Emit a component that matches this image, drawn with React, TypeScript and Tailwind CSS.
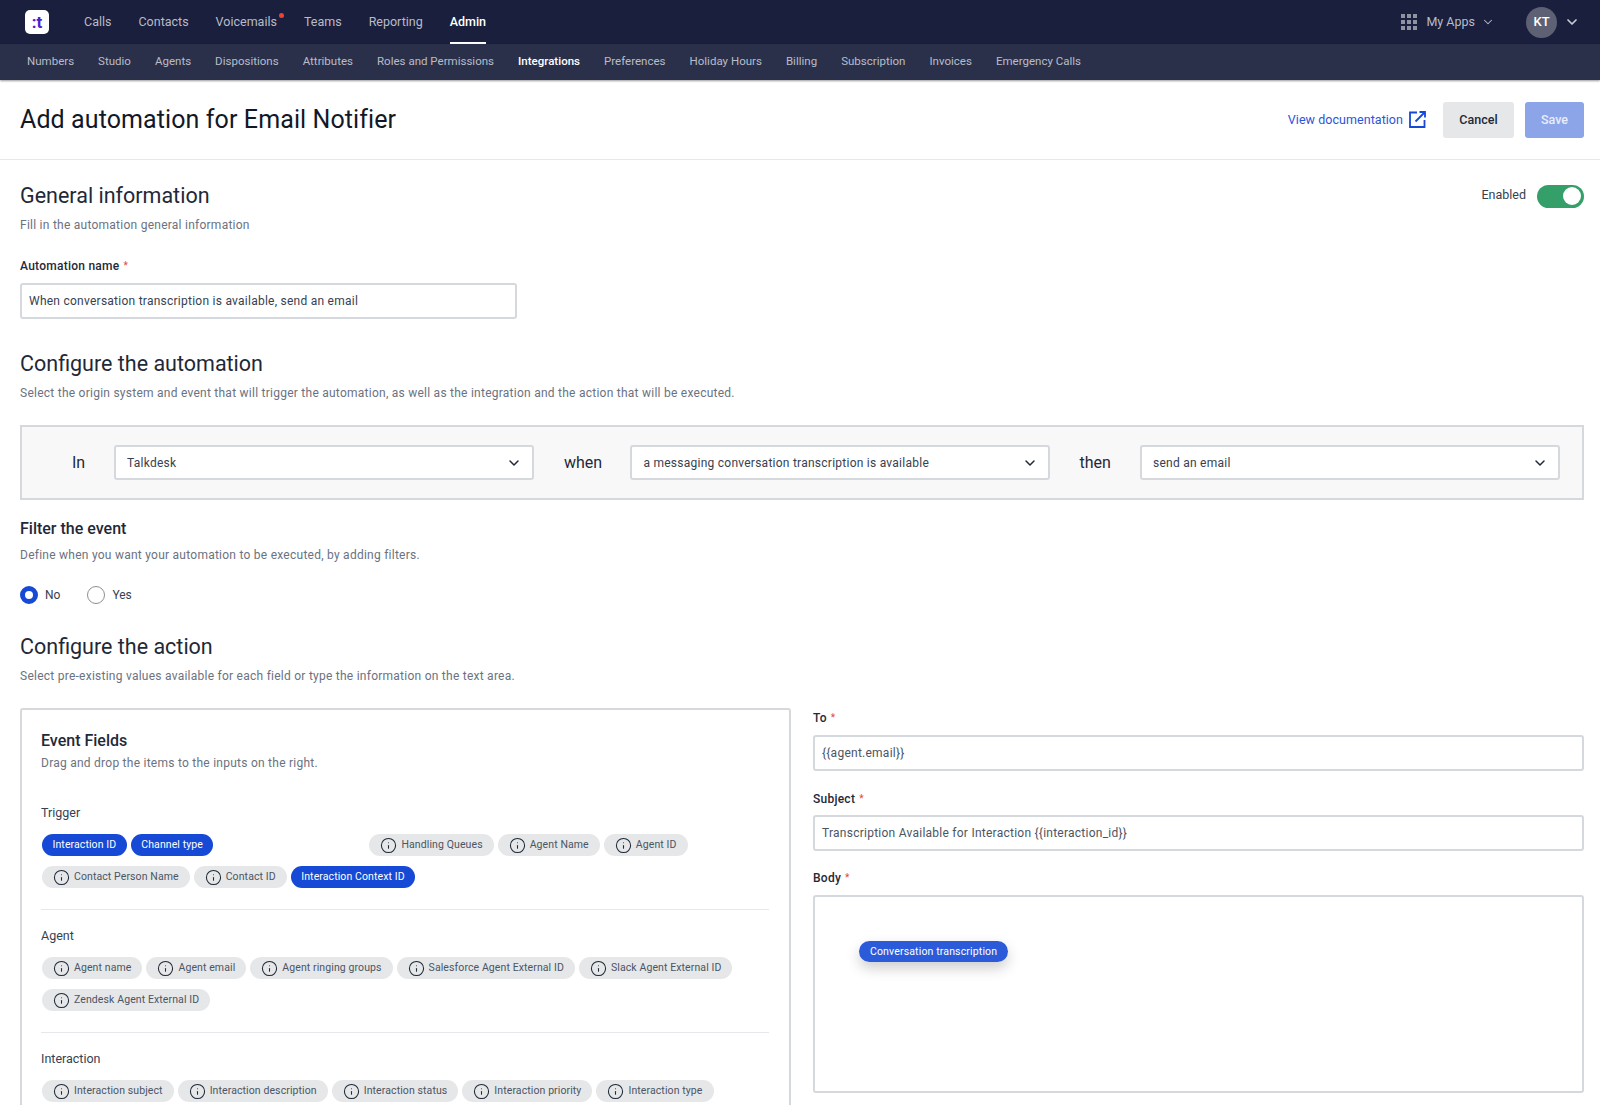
import { ChevronDown, Info } from "lucide-react"

const mainLinks = ["Calls", "Contacts", "Voicemails", "Teams", "Reporting", "Admin"]
const subLinks = ["Numbers", "Studio", "Agents", "Dispositions", "Attributes", "Roles and Permissions", "Integrations", "Preferences", "Holiday Hours", "Billing", "Subscription", "Invoices", "Emergency Calls"]

function Chip({ label, active }: { label: string; active?: boolean }) {
    if (active) {
        return <span className="h-[22px] px-[10.5px] rounded-full bg-[#1549d6] text-white text-[10.5px] leading-[22px] tracking-[0.1px] whitespace-nowrap">{label}</span>
    }
    return (
        <span className="h-[22px] pl-[11px] pr-[11px] rounded-full bg-[#e6e7e9] text-[#4b5563] text-[10.5px] tracking-[0.1px] flex items-center gap-[4px] whitespace-nowrap">
            <Info size={17} strokeWidth={1.5} className="text-[#1f2937]" />
            {label}
        </span>
    )
}

function FieldLabel({ label }: { label: string }) {
    return (
        <div className="text-[12px] font-medium leading-[14px] tracking-[0.25px] text-[#1f2937] flex items-center gap-[4px]">
            {label}
            <span className="text-[#e5443a] text-[10px] font-normal">*</span>
        </div>
    )
}

function Select({ value, width }: { value: string; width: string }) {
    return (
        <div className={`${width} h-[35px] bg-white border-2 border-[#d5d9dd] rounded-[3px] pl-[11px] pr-[10px] flex items-center justify-between text-[12px] tracking-[0.25px] text-[#374151]`}>
            {value}
            <ChevronDown size={16} strokeWidth={2.2} className="text-[#1f2937]" />
        </div>
    )
}

export default function App() {
    return (
        <div className="h-[1105px] overflow-hidden bg-white font-['Roboto',sans-serif]">
            <header className="h-[44px] bg-[#191f3c] flex items-center pl-[25px] pr-[20px]">
                <div className="w-[24px] h-[24px] bg-white rounded-[5px] flex items-center justify-center text-[#4a1fd0] text-[17px] font-bold leading-none">:t</div>
                <nav className="flex h-full ml-[35px] gap-[27px]">
                    {mainLinks.map((link) => (
                        <div key={link} className={`relative h-full flex items-center text-[12.5px] ${link === "Admin" ? "text-white font-medium" : "text-[#b9bcc8]"}`}>
                            {link}
                            {link === "Voicemails" && <span className="absolute top-[13px] right-[-7px] w-[5px] h-[5px] rounded-full bg-[#ef4136]" />}
                            {link === "Admin" && <span className="absolute bottom-0 left-0 right-0 h-[2px] bg-white" />}
                        </div>
                    ))}
                </nav>
                <div className="ml-auto flex items-center text-[#b9bcc8] text-[12.5px]">
                    <div className="grid grid-cols-3 gap-[2px] w-[15px]">
                        {Array.from({ length: 9 }).map((_, i) => <span key={i} className="w-[4px] h-[4px] bg-[#8f92a1]" />)}
                    </div>
                    <span className="ml-[10px]">My Apps</span>
                    <ChevronDown size={14} strokeWidth={1.8} className="ml-[6px]" />
                    <div className="ml-[31px] w-[31px] h-[31px] rounded-full bg-[#5e6173] text-white text-[13px] font-medium flex items-center justify-center">KT</div>
                    <ChevronDown size={16} strokeWidth={2.6} className="ml-[7px] text-[#c9cbd3]" />
                </div>
            </header>
            <div className="h-[36px] bg-[#2a304a] shadow-[0_1px_2px_rgba(0,0,0,0.4)] flex items-center pl-[27px] gap-[24px] relative">
                {subLinks.map((link) => (
                    <span key={link} className={`text-[11.5px] tracking-[0.01px] ${link === "Integrations" ? "text-white font-medium" : "text-[#b9bcc8]"}`}>{link}</span>
                ))}
            </div>
            <div className="h-[80px] border-b border-[#e5e7eb] flex items-center justify-between px-[16px] pl-[20px]">
                <h1 className="text-[25px] font-[450] tracking-[0.1px] text-[#111827]">Add automation for Email Notifier</h1>
                <div className="flex items-center">
                    <span className="pt-[1px] text-[#2b55d9] text-[12.5px] tracking-[0.05px]">View documentation</span>
                    <svg width="17" height="17" viewBox="0 0 17 17" fill="none" stroke="#1549d6" strokeWidth="1.8" className="ml-[6px]">
                        <path d="M8 1.5H1V16H15.5V9" />
                        <path d="M6.5 10.5L15.5 1.5M10.5 1H16V6.5" />
                    </svg>
                    <button className="ml-[17px] w-[71px] h-[36px] pt-[1px] bg-[#e6e7e9] rounded-[3px] text-[12.5px] font-medium text-[#1f2937]">Cancel</button>
                    <button className="ml-[11px] w-[59px] h-[36px] pt-[1px] bg-[#8ca5e8] rounded-[3px] text-[12.5px] font-medium text-[#e8edfb]">Save</button>
                </div>
            </div>
            <main className="px-[16px] pl-[20px]">
                <div className="flex justify-between pt-[23px]">
                    <div>
                        <h2 className="text-[21.5px] leading-[26px] text-[#1f2937]">General information</h2>
                        <p className="mt-[9px] text-[12px] leading-[14px] tracking-[0.25px] text-[#6b7280]">Fill in the automation general information</p>
                    </div>
                    <div className="flex items-center h-[24px] mt-[1px]">
                        <span className="text-[12.5px] text-[#374151] -mt-[1px]">Enabled</span>
                        <div className="ml-[11px] w-[47px] h-[23px] rounded-full bg-[#349f69] flex items-center justify-end pr-[3px]">
                            <span className="w-[18px] h-[18px] rounded-full bg-white" />
                        </div>
                    </div>
                </div>
                <div className="mt-[27px]"><FieldLabel label="Automation name" /></div>
                <div className="mt-[10px] w-[497px] h-[36px] border-2 border-[#d5d9dd] rounded-[3px] px-[7px] flex items-center text-[12px] tracking-[0.25px] text-[#374151]">When conversation transcription is available, send an email</div>
                <h2 className="mt-[32px] text-[21.5px] leading-[26px] text-[#1f2937]">Configure the automation</h2>
                <p className="mt-[9px] text-[12px] leading-[14px] tracking-[0.25px] text-[#6b7280]">Select the origin system and event that will trigger the automation, as well as the integration and the action that will be executed.</p>
                <div className="mt-[25px] h-[75px] bg-[#f8f8f9] border-2 border-[#d5d9dd] flex items-center pl-[50px] pr-[22px] text-[16px] text-[#1f2937]">
                    <span className="w-[13px]">In</span>
                    <div className="ml-[29px]"><Select value="Talkdesk" width="w-[420px]" /></div>
                    <span className="ml-[30px] w-[39px]">when</span>
                    <div className="ml-[28px]"><Select value="a messaging conversation transcription is available" width="w-[420px]" /></div>
                    <span className="ml-[29px] w-[32px]">then</span>
                    <div className="ml-[29px]"><Select value="send an email" width="w-[420px]" /></div>
                </div>
                <h3 className="mt-[19px] text-[16px] leading-[19px] font-medium text-[#1f2937]">Filter the event</h3>
                <p className="mt-[10px] text-[12px] leading-[14px] tracking-[0.25px] text-[#6b7280]">Define when you want your automation to be executed, by adding filters.</p>
                <div className="mt-[24px] flex items-center text-[12px] text-[#374151]">
                    <span className="w-[18px] h-[18px] rounded-full border-[5px] border-[#1549d6]" />
                    <span className="ml-[7px]">No</span>
                    <span className="ml-[27px] w-[18px] h-[18px] rounded-full border-[1.5px] border-[#8b8f97]" />
                    <span className="ml-[7px]">Yes</span>
                </div>
                <h2 className="mt-[30px] text-[21.5px] leading-[26px] text-[#1f2937]">Configure the action</h2>
                <p className="mt-[9px] text-[12px] leading-[14px] tracking-[0.25px] text-[#6b7280]">Select pre-existing values available for each field or type the information on the text area.</p>
                <div className="mt-[25px] flex items-start">
                    <section className="w-[771px] h-[500px] shrink-0 border-2 border-[#d5d9dd] rounded-[3px] pl-[19px] pr-[20px] pt-[22px]">
                        <h3 className="text-[16px] leading-[18px] font-medium text-[#1f2937]">Event Fields</h3>
                        <p className="mt-[6px] text-[12px] leading-[14px] tracking-[0.25px] text-[#6b7280]">Drag and drop the items to the inputs on the right.</p>
                        <div className="mt-[35px] text-[12.5px] leading-[15px] text-[#374151]">Trigger</div>
                        <div className="mt-[14px] ml-[1px] flex flex-wrap gap-x-[4px] gap-y-[10px]">
                            <Chip label="Interaction ID" active />
                            <Chip label="Channel type" active />
                            <div className="w-[148px] h-[22px]" />
                            <Chip label="Handling Queues" />
                            <Chip label="Agent Name" />
                            <Chip label="Agent ID" />
                            <Chip label="Contact Person Name" />
                            <Chip label="Contact ID" />
                            <Chip label="Interaction Context ID" active />
                        </div>
                        <div className="mt-[21px] border-t border-[#e5e7eb]" />
                        <div className="mt-[18px] text-[12.5px] leading-[15px] text-[#374151]">Agent</div>
                        <div className="mt-[14px] ml-[1px] flex flex-wrap gap-x-[4px] gap-y-[10px]">
                            <Chip label="Agent name" />
                            <Chip label="Agent email" />
                            <Chip label="Agent ringing groups" />
                            <Chip label="Salesforce Agent External ID" />
                            <Chip label="Slack Agent External ID" />
                            <Chip label="Zendesk Agent External ID" />
                        </div>
                        <div className="mt-[21px] border-t border-[#e5e7eb]" />
                        <div className="mt-[18px] text-[12.5px] leading-[15px] text-[#374151]">Interaction</div>
                        <div className="mt-[14px] ml-[1px] flex flex-wrap gap-x-[4px] gap-y-[10px]">
                            <Chip label="Interaction subject" />
                            <Chip label="Interaction description" />
                            <Chip label="Interaction status" />
                            <Chip label="Interaction priority" />
                            <Chip label="Interaction type" />
                        </div>
                    </section>
                    <section className="flex-1 ml-[22px] pt-[3px]">
                        <FieldLabel label="To" />
                        <div className="mt-[10px] h-[36px] border-2 border-[#d5d9dd] rounded-[3px] px-[7px] flex items-center text-[12px] tracking-[0.25px] text-[#4b5563]">{"{{agent.email}}"}</div>
                        <div className="mt-[21px]"><FieldLabel label="Subject" /></div>
                        <div className="mt-[9px] h-[36px] border-2 border-[#d5d9dd] rounded-[3px] px-[7px] flex items-center text-[12px] tracking-[0.25px] text-[#4b5563]">{"Transcription Available for Interaction {{interaction_id}}"}</div>
                        <div className="mt-[20px]"><FieldLabel label="Body" /></div>
                        <div className="relative mt-[10px] h-[198px] border-2 border-[#d5d9dd] rounded-[3px]">
                            <span className="absolute left-[44px] top-[44px] h-[21px] px-[11px] rounded-full bg-[#2b5bd9] text-white text-[10.5px] leading-[21px] tracking-[0.15px] whitespace-nowrap shadow-[0_6px_14px_rgba(0,0,0,0.2)]">Conversation transcription</span>
                        </div>
                    </section>
                </div>
            </main>
        </div>
    )
}
